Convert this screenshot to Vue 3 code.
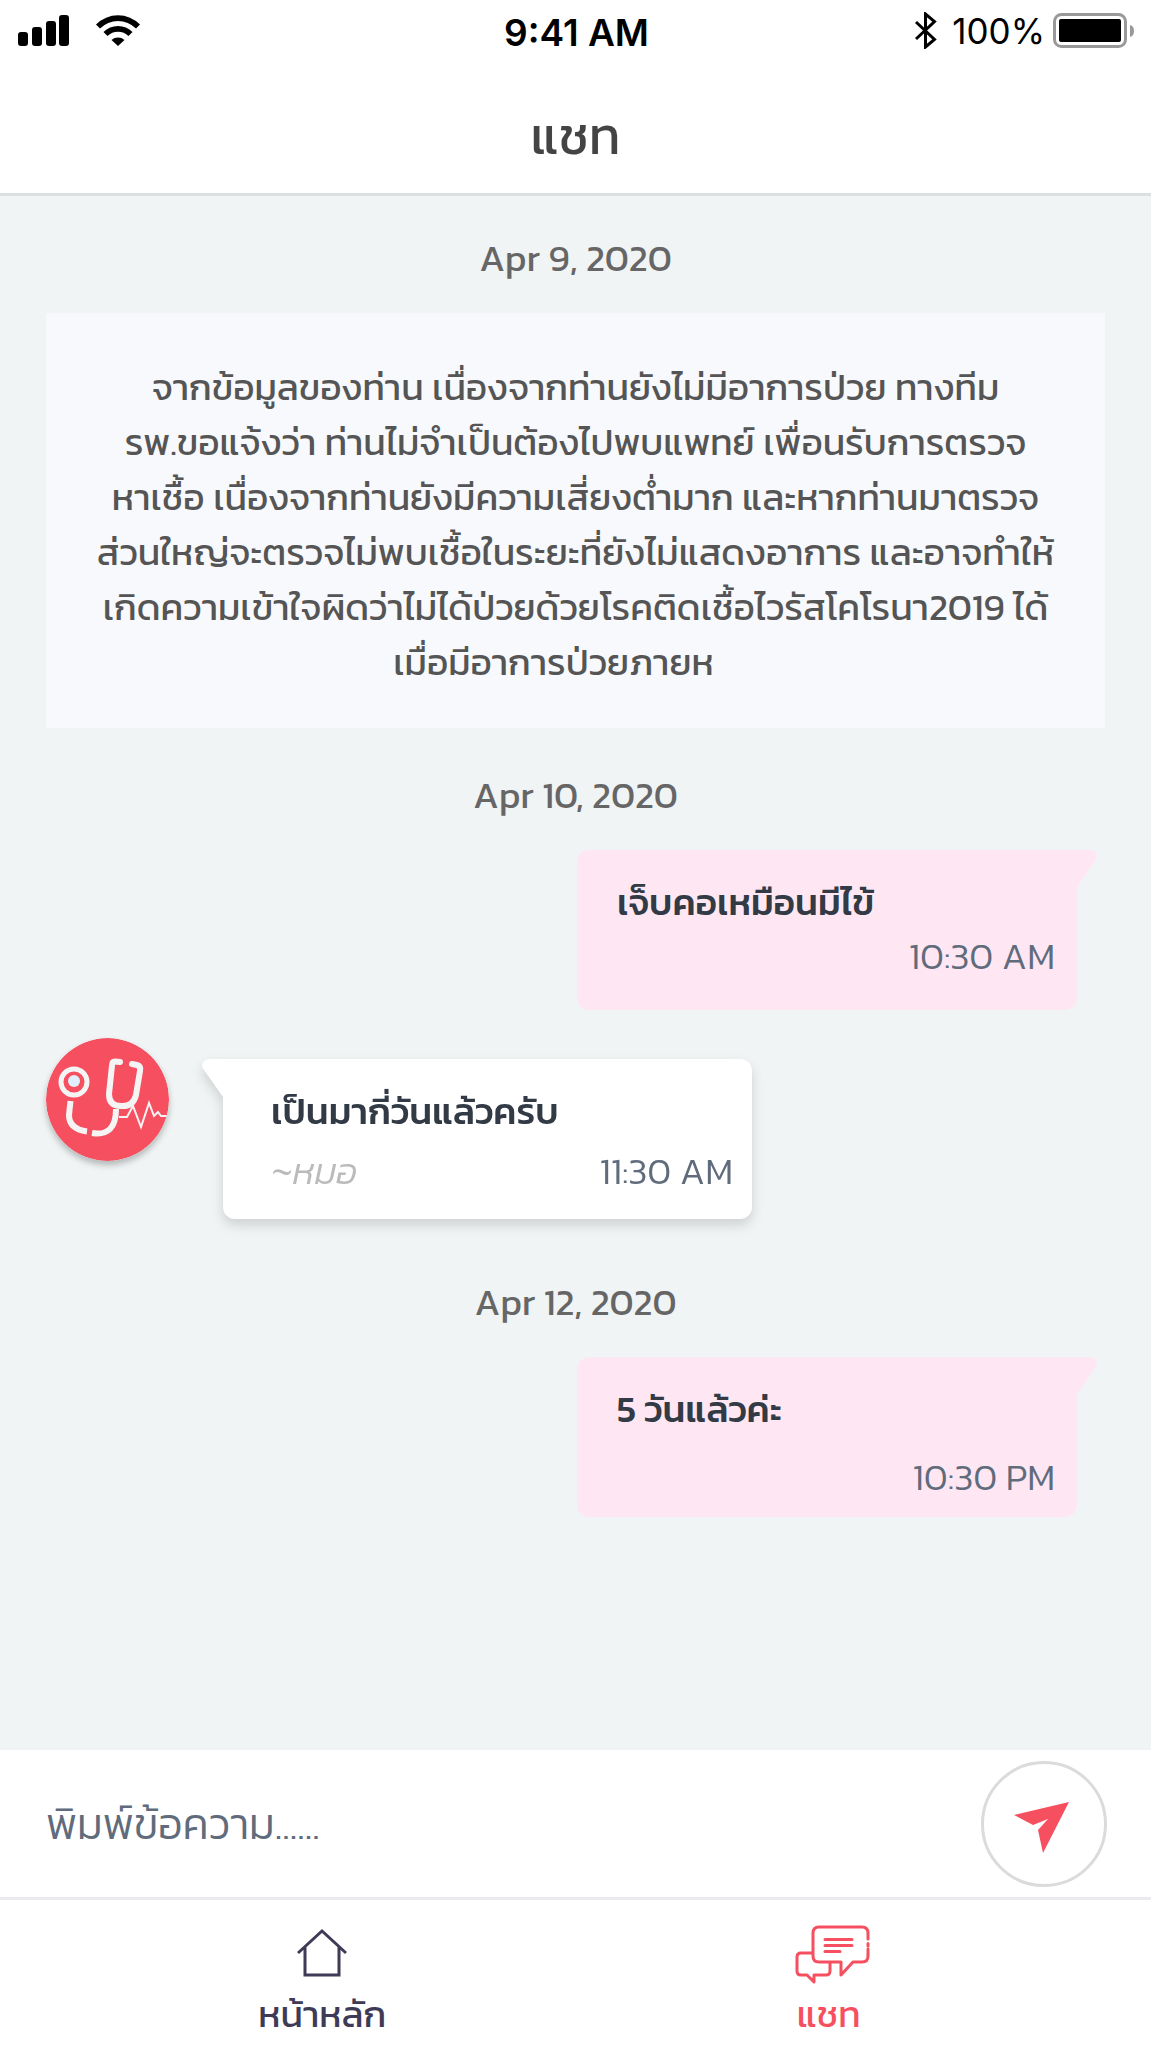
<script setup>
import { ref } from 'vue'

const draft = ref('')

const noticeLines = [
  'จากข้อมูลของท่าน เนื่องจากท่านยังไม่มีอาการป่วย ทางทีม',
  'รพ.ขอแจ้งว่า ท่านไม่จำเป็นต้องไปพบแพทย์ เพื่อนรับการตรวจ',
  'หาเชื้อ เนื่องจากท่านยังมีความเสี่ยงต่ำมาก และหากท่านมาตรวจ',
  'ส่วนใหญ่จะตรวจไม่พบเชื้อในระยะที่ยังไม่แสดงอาการ และอาจทำให้',
  'เกิดความเข้าใจผิดว่าไม่ได้ป่วยด้วยโรคติดเชื้อไวรัสโคโรนา2019 ได้',
  'เมื่อมีอาการป่วยภายห',
]
</script>

<template>
  <div class="app">
    <header class="top">
      <div class="status">
        <div class="status-left">
          <svg class="signal" viewBox="0 0 51 31" aria-hidden="true">
            <rect x="0" y="17" width="10" height="14" rx="3" />
            <rect x="14" y="12" width="10" height="19" rx="3" />
            <rect x="28" y="6" width="10" height="25" rx="3" />
            <rect x="41" y="0" width="10" height="31" rx="3" />
          </svg>
          <svg class="wifi" viewBox="0 0 44 31" aria-hidden="true">
            <path d="M0 9.500a31 31 0 0 1 44 0l-4 4a25.500 25.500 0 0 0-36 0z" />
            <path d="M7.500 17a20.500 20.500 0 0 1 29 0l-4 4a15 15 0 0 0-21 0z" />
            <path d="M15.500 25a10 10 0 0 1 13 0L22 31z" />
          </svg>
        </div>
        <time class="clock">9:41 AM</time>
        <div class="status-right">
          <svg class="bluetooth" viewBox="0 0 22 37" aria-hidden="true">
            <path d="M1 10l18.500 17.500L10.500 35V2l9 7.500L1 27" />
          </svg>
          <span class="charge">100%</span>
          <svg class="battery" viewBox="0 0 83 35" aria-hidden="true">
            <rect x="2.500" y="1.500" width="71" height="32" rx="7" fill="none" stroke="#999" stroke-width="3" />
            <rect x="7" y="6" width="62" height="23" rx="2" />
            <path d="M78 12q4 1 4 6t-4 6z" fill="#999" />
          </svg>
        </div>
      </div>
      <h1 class="title">แชท</h1>
    </header>

    <main class="chat">
      <p class="date">Apr 9, 2020</p>
      <p class="notice">
        <span v-for="line in noticeLines" :key="line">{{ line }}</span>
      </p>

      <p class="date">Apr 10, 2020</p>
      <article class="bubble mine">
        <svg class="tail" viewBox="0 0 20 37" aria-hidden="true">
          <path d="M0 0H14Q20 1 20 7L19 10L0 37z" />
        </svg>
        <p class="text">เจ็บคอเหมือนมีไข้</p>
        <time class="stamp">10:30 AM</time>
      </article>

      <div class="incoming">
        <svg class="avatar" viewBox="0 0 123 123" role="img" aria-label="หมอ">
          <circle cx="61.500" cy="61.500" r="61.500" fill="#f65060" />
          <g fill="none" stroke="#f4f4f4" stroke-width="6">
            <circle cx="28" cy="44" r="13" stroke-width="5" />
            <path d="M24.500 63L23 77q0 14 18 16.500" />
            <path d="M46 95q24 4 24-24" />
            <path d="M74 24l-5-.500q-3 0-3 4L63 56q0 12 12 12 12 1 15-11l4-24q1-5-3-6l-5-1" stroke-linecap="round" />
            <path d="M73 79h8l6-11 8 21 8-24 5 13 4-4 3 4h6" stroke-width="2" />
          </g>
          <circle cx="28" cy="43" r="6" fill="#e0effb" />
        </svg>
        <article class="bubble theirs">
          <svg class="tail" viewBox="0 0 21 38" aria-hidden="true">
            <path d="M21 0H7Q1 1 0 6Q0 9 2 11L21 38z" />
          </svg>
          <p class="text">เป็นมากี่วันแล้วครับ</p>
          <div class="meta">
            <span class="author">~หมอ</span>
            <time class="stamp">11:30 AM</time>
          </div>
        </article>
      </div>

      <p class="date">Apr 12, 2020</p>
      <article class="bubble mine late">
        <svg class="tail" viewBox="0 0 20 37" aria-hidden="true">
          <path d="M0 0H14Q20 1 20 7L19 10L0 37z" />
        </svg>
        <p class="text">5 วันแล้วค่ะ</p>
        <time class="stamp">10:30 PM</time>
      </article>
    </main>

    <form class="composer" @submit.prevent="draft = ''">
      <input v-model="draft" class="field" type="text" placeholder="พิมพ์ข้อความ......" aria-label="พิมพ์ข้อความ" />
      <button class="send" type="submit" aria-label="ส่ง">
        <svg viewBox="0 -8 61 59" aria-hidden="true">
          <path d="M0 13L55 0L29 51L24 28L34 17L19 23z" />
        </svg>
      </button>
    </form>

    <nav class="tabs">
      <a class="tab" href="#home">
        <svg class="home" viewBox="0 1 50 48" aria-hidden="true">
          <path d="M1 24L25 2L49 24M8 18V46H42V18" />
        </svg>
        <span>หน้าหลัก</span>
      </a>
      <a class="tab active" href="#chat" aria-current="page">
        <svg class="chats" viewBox="-8 -1 83 60" aria-hidden="true">
          <path d="M73 14V8q0-6-6-6H24q-6 0-6 6V31q0 6 6 6H46V50L58 37H67q6 0 6-6V24M73 18.500v2.500M30 14.500H57M30 20.500H57M30 26.500H45M17 28H6q-4 0-4 4V46q0 4 4 4H12L19 57V50H31q4 0 4-4V38" />
        </svg>
        <span>แชท</span>
      </a>
    </nav>
  </div>
</template>

<style>
body {
  margin: 0;
}
</style>

<style scoped>
.app {
  display: flex;
  flex-direction: column;
  min-height: 100vh;
  background: #f0f4f5;
  font-family: Kanit, "Noto Sans", "Noto Sans Thai", sans-serif;
  font-size: 37px;
}

.app * {
  box-sizing: border-box;
}

p,
h1 {
  margin: 0;
}

.top {
  background: #fff;
  border-bottom: 3px solid #dde0e3;
}

.status {
  display: grid;
  grid-template-columns: 1fr auto 1fr;
  align-items: center;
  height: 61px;
  padding: 0 16px 0 18px;
  font-family: Inter, sans-serif;
  color: #000;
}

.status-left,
.status-right {
  display: flex;
  align-items: center;
}

.status-left {
  gap: 27px;
}

.status-right {
  justify-content: flex-end;
  gap: 7px;
}

.clock {
  padding-top: 3px;
  font-weight: 600;
}

.charge {
  font-size: 35px;
}

.signal {
  width: 51px;
  height: 31px;
}

.wifi {
  width: 44px;
  height: 31px;
}

.bluetooth {
  width: 22px;
  height: 37px;
  margin-right: 8px;
  fill: none;
  stroke: #000;
  stroke-width: 3;
}

.battery {
  width: 83px;
  height: 35px;
}

.title {
  height: 132px;
  line-height: 150px;
  text-align: center;
  font-size: 52px;
  font-weight: 400;
  color: #444;
}

.chat {
  flex: 1;
  display: flex;
  flex-direction: column;
  padding: 0 46px;
}

.date {
  margin: 39px 0 27px;
  line-height: 56px;
  text-align: center;
  font-weight: 400;
  color: #666;
}

.date:first-child {
  margin-top: 34px;
}

.notice {
  padding: 47px 24px 38px;
  background: #f8f9fc;
  text-align: center;
  line-height: 55px;
  color: #555;
}

.notice span {
  display: block;
  white-space: nowrap;
}

.notice span:last-child {
  padding-right: 44px;
}

.bubble {
  position: relative;
  display: flex;
  flex-direction: column;
  height: 160px;
  border-radius: 12px;
}

.mine {
  align-self: flex-end;
  width: 500px;
  margin-right: 28px;
  padding: 24px 22px 0 40px;
  border-top-right-radius: 0;
  background: #fee7f3;
}

.theirs {
  width: 529px;
  padding: 24px 19px 0 48px;
  border-top-left-radius: 0;
  background: #fff;
  filter: drop-shadow(0 6px 6px rgba(0, 0, 0, 0.14));
}

.tail {
  position: absolute;
  top: 0;
}

.mine .tail {
  left: 100%;
  width: 20px;
  height: 37px;
  fill: #fee7f3;
}

.theirs .tail {
  right: 100%;
  width: 21px;
  height: 38px;
  fill: #fff;
}

.text {
  line-height: 56px;
  font-weight: 500;
  color: #323a45;
}

.stamp {
  align-self: flex-end;
  line-height: 52px;
  font-weight: 300;
  color: #606b7c;
}

.late .stamp {
  margin-top: 14px;
}

.incoming {
  display: flex;
  align-items: flex-start;
  gap: 54px;
  margin: 28px 0 16px;
}

.avatar {
  flex: none;
  width: 123px;
  height: 123px;
  border-radius: 50%;
  box-shadow: 0 4px 6px rgba(0, 0, 0, 0.25);
}

.incoming .bubble {
  margin-top: 21px;
}

.meta {
  display: flex;
  justify-content: space-between;
  margin-top: 6px;
}

.author {
  line-height: 52px;
  font-style: italic;
  font-weight: 300;
  color: #bbb;
}

.composer {
  display: flex;
  align-items: center;
  height: 147px;
  padding: 0 44px 0 46px;
  background: #fff;
}

.field {
  flex: 1;
  min-width: 0;
  height: 80px;
  padding: 0;
  border: 0;
  outline: 0;
  background: none;
  font-family: inherit;
  font-size: 43px;
  font-weight: 300;
  color: #606b7c;
}

.field::placeholder {
  color: #606b7c;
  opacity: 1;
}

.send {
  display: grid;
  place-items: center;
  width: 126px;
  height: 126px;
  padding: 0;
  border: 3px solid #dbdbdb;
  border-radius: 50%;
  background: #fff;
}

.send svg {
  width: 61px;
  height: 59px;
  fill: #f65060;
}

.tabs {
  display: grid;
  grid-template-columns: 1fr 1fr;
  height: 151px;
  padding: 0 6%;
  border-top: 3px solid #e9ebf0;
  background: #fff;
}

.tab {
  display: flex;
  flex-direction: column;
  align-items: center;
  gap: 2px;
  padding-top: 24px;
  font-weight: 400;
  line-height: 56px;
  text-decoration: none;
  color: #3f3a56;
}

.tab svg {
  height: 60px;
  fill: none;
  stroke: currentColor;
}

.home {
  width: 50px;
  stroke-width: 3;
}

.chats {
  width: 83px;
  stroke-width: 3;
  stroke-linecap: round;
  stroke-linejoin: round;
}

.active {
  color: #f65060;
}
</style>
